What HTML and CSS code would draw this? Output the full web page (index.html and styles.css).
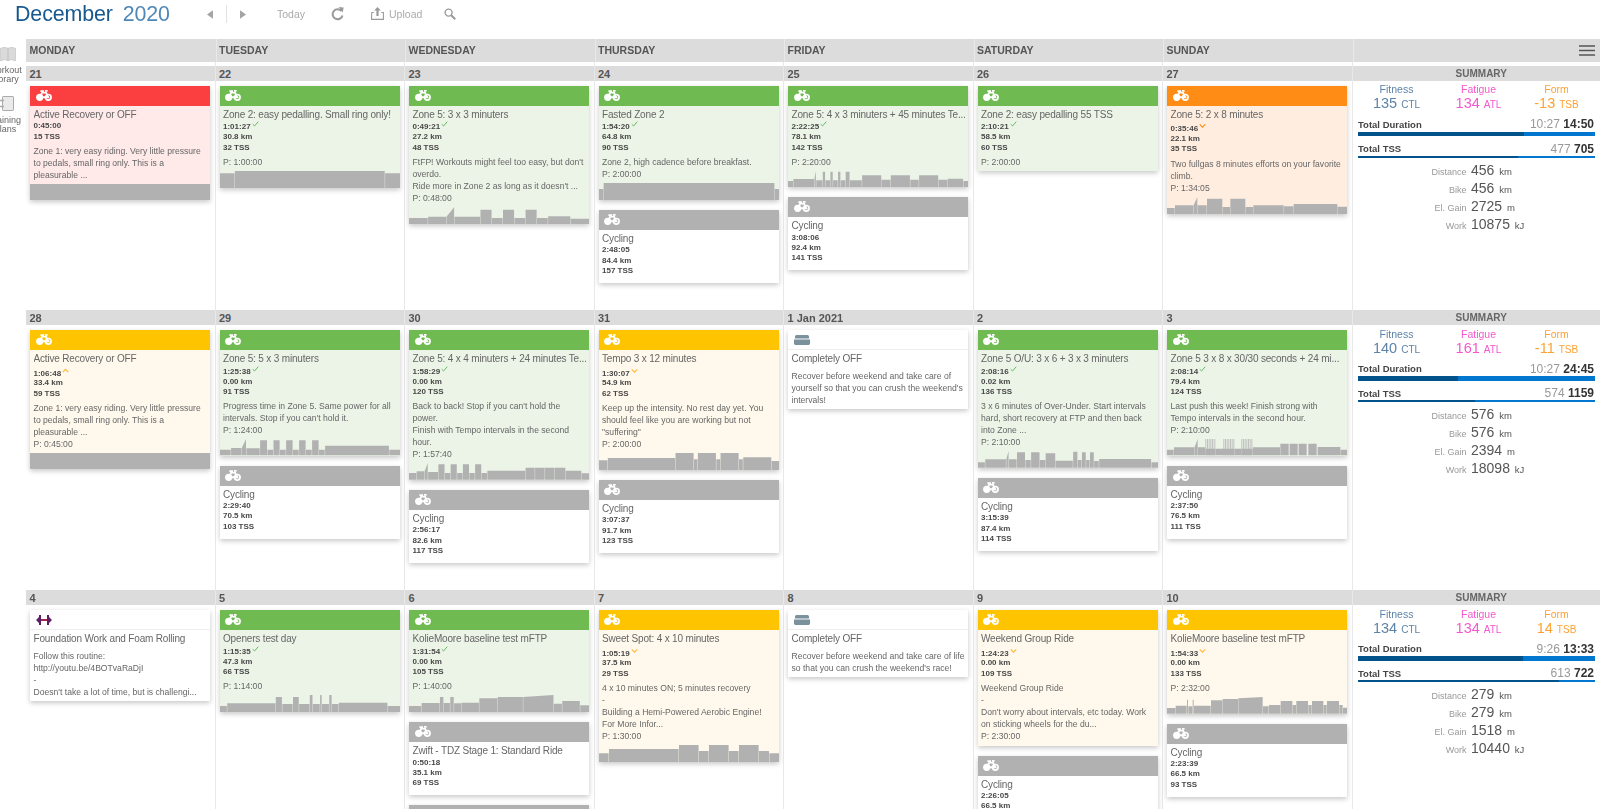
FILE: index.html
```html
<!DOCTYPE html>
<html lang="en">
<head>
<meta charset="utf-8">
<title>December 2020</title>
<link rel="stylesheet" href="styles.css">
</head>
<body>
<svg class="sprite" aria-hidden="true">
  <symbol id="bike" viewBox="0 0 16 11">
    <circle cx="3.7" cy="7.3" r="3.6" fill="currentColor"/>
    <circle cx="3.7" cy="7.3" r="1" fill="none" stroke="currentColor" stroke-width=".6"/>
    <circle cx="12.3" cy="7.3" r="2.8" fill="none" stroke="currentColor" stroke-width="1.7"/>
    <path d="M3.7 7.3 6.2 2.6H10L12.3 7.3H7.6Z" fill="none" stroke="currentColor" stroke-width="1.9"/>
    <path d="M4.4 1.1H8M9 .9H11.6" fill="none" stroke="currentColor" stroke-width="1.8"/>
  </symbol>
  <symbol id="rest" viewBox="0 0 16 10">
    <path d="M2.5 0H13.5Q15 0 15 1.5V3.6H1V1.5Q1 0 2.5 0Z" fill="#7b919c"/>
    <path d="M0 4.6H16V8.6Q16 10 14.6 10H1.4Q0 10 0 8.6Z" fill="#7b919c"/>
    <rect x="2" y="3.6" width="12" height="1" fill="#b9c5cb"/>
  </symbol>
  <symbol id="weights" viewBox="0 0 16 10">
    <path d="M3 0H5V10H3ZM11 0H13V10H11Z" fill="#5c1f63"/>
    <path d="M0 5 3 2V8ZM16 5 13 2V8Z" fill="#5c1f63"/>
    <rect x="5" y="4" width="6" height="2" fill="#a3244e"/>
  </symbol>
  <symbol id="tick" viewBox="0 0 8 7"><path d="M.8 3.8 2.9 5.8 7.2.8" fill="none" stroke="currentColor" stroke-width="1.1"/></symbol>
  <symbol id="down" viewBox="0 0 8 7"><path d="M.8 1.6 4 4.8 7.2 1.6" fill="none" stroke="currentColor" stroke-width="1.3"/></symbol>
  <symbol id="up" viewBox="0 0 8 7"><path d="M.8 4.8 4 1.6 7.2 4.8" fill="none" stroke="currentColor" stroke-width="1.3"/></symbol>
</svg>

<div class="app">
  <header class="topbar">
    <h1 class="month">December <span class="year">2020</span></h1>
    <nav class="pager">
      <svg class="arrow" viewBox="0 0 7 10"><path d="M7 0V10L0 5Z"/></svg>
      <span class="pager-rule"></span>
      <svg class="arrow" viewBox="0 0 7 10"><path d="M0 0V10L7 5Z"/></svg>
    </nav>
    <span class="tool tool-today">Today</span>
    <svg class="tool-icon refresh" viewBox="0 0 13 14"><path d="M10.6 4.2A5 5 0 1 0 11.5 8.4" fill="none" stroke="#9a9a9a" stroke-width="2"/><path d="M7.6 0 12.6 .4 11.8 5.4Z" fill="#9a9a9a"/></svg>
    <svg class="tool-icon upload" viewBox="0 0 13 13"><path d="M.6 5.5V12.4H12.4V5.5H10.2M.6 5.5H2.8" fill="none" stroke="#9a9a9a" stroke-width="1.1"/><path d="M6.5 0 9.8 3.6H7.6V9H5.4V3.6H3.2Z" fill="#9a9a9a"/></svg>
    <span class="tool tool-upload">Upload</span>
    <svg class="tool-icon search" viewBox="0 0 12 12"><circle cx="4.6" cy="4.6" r="3.5" fill="none" stroke="#9a9a9a" stroke-width="1.4"/><path d="M7.2 7.2 11.2 11.2" stroke="#9a9a9a" stroke-width="2"/></svg>
  </header>

  <div class="main">
    <aside class="sidebar">
      <div class="side-item">
        <svg class="side-book" viewBox="0 0 16 14"><path d="M0 1.5 5 0 8 1.5 11 0 16 1.5V14L11 12.5 8 14 5 12.5 0 14Z" fill="#dadada" stroke="#bdbdbd" stroke-width=".6"/><path d="M8 1.5V14" stroke="#b5b5b5" stroke-width=".7"/></svg>
        <span class="side-label">Workout<br>Library</span>
      </div>
      <div class="side-item side-item-plans">
        <svg class="side-plan" viewBox="0 0 14 15"><rect x="2.5" y=".5" width="11" height="14" rx=".6" fill="#eaeaea" stroke="#ababab"/><path d="M0 4.5H4M0 10.5H4" stroke="#ababab" stroke-width="1.4"/></svg>
        <span class="side-label">Training<br>Plans</span>
      </div>
    </aside>

    <div class="calendar">
      <div class="week-head">
        <div class="head-cell">MONDAY</div>
        <div class="head-cell">TUESDAY</div>
        <div class="head-cell">WEDNESDAY</div>
        <div class="head-cell">THURSDAY</div>
        <div class="head-cell">FRIDAY</div>
        <div class="head-cell">SATURDAY</div>
        <div class="head-cell">SUNDAY</div>
        <div class="head-cell head-menu"><svg class="menu" viewBox="0 0 16 11"><path d="M0 1H16M0 5.5H16M0 10H16" stroke="#555" stroke-width="1.4"/></svg></div>
      </div>

      <!-- WEEK 1 -->
      <section class="week week-first">
        <div class="day"><div class="date">21</div><div class="stack">
          <article class="card red">
            <div class="card-head"><svg class="bike"><use href="#bike"/></svg></div>
            <div class="card-body">
              <h3 class="card-title">Active Recovery or OFF</h3>
              <ul class="card-stats"><li>0:45:00</li><li>15 TSS</li></ul>
              <div class="card-notes"><p>Zone 1: very easy riding. Very little pressure to pedals, small ring only. This is a pleasurable ...</p></div>
            </div>
            <svg class="chart" height="16.33" viewBox="0 0 471 49" preserveAspectRatio="none"><path d="M0 49V0H471V49Z"/></svg>
          </article>
        </div></div>

        <div class="day"><div class="date">22</div><div class="stack">
          <article class="card green">
            <div class="card-head"><svg class="bike"><use href="#bike"/></svg></div>
            <div class="card-body">
              <h3 class="card-title">Zone 2: easy pedalling. Small ring only!</h3>
              <ul class="card-stats"><li>1:01:27 <svg class="flag ok"><use href="#tick"/></svg></li><li>30.8 km</li><li>32 TSS</li></ul>
              <div class="card-notes"><p>P: 1:00:00</p></div>
            </div>
            <svg class="chart" height="17" viewBox="0 0 471 51" preserveAspectRatio="none"><path d="M0 51V7H38V51ZM39 51V0H431V51ZM432 51V7H471V51Z"/></svg>
          </article>
        </div></div>

        <div class="day"><div class="date">23</div><div class="stack">
          <article class="card green">
            <div class="card-head"><svg class="bike"><use href="#bike"/></svg></div>
            <div class="card-body">
              <h3 class="card-title">Zone 5: 3 x 3 minuters</h3>
              <ul class="card-stats"><li>0:49:21 <svg class="flag ok"><use href="#tick"/></svg></li><li>27.2 km</li><li>48 TSS</li></ul>
              <div class="card-notes"><p>FtFP! Workouts might feel too easy, but don't overdo.<br>Ride more in Zone 2 as long as it doesn't ...</p><p>P: 0:48:00</p></div>
            </div>
            <svg class="chart" height="17.33" viewBox="0 0 471 52" preserveAspectRatio="none"><path d="M0 52V33H49V52ZM50 52V29H97V52ZM98 52V29L118 1V52ZM119 52V29H186V52ZM187 52V8H216V52ZM217 52V33H245V52ZM246 52V8H275V52ZM276 52V33H304V52ZM305 52V8H334V52ZM335 52V33H363V52ZM364 52V28H422V52ZM423 52V35H471V52Z"/></svg>
          </article>
        </div></div>

        <div class="day"><div class="date">24</div><div class="stack">
          <article class="card green">
            <div class="card-head"><svg class="bike"><use href="#bike"/></svg></div>
            <div class="card-body">
              <h3 class="card-title">Fasted Zone 2</h3>
              <ul class="card-stats"><li>1:54:20 <svg class="flag ok"><use href="#tick"/></svg></li><li>64.8 km</li><li>90 TSS</li></ul>
              <div class="card-notes"><p>Zone 2, high cadence before breakfast.</p><p>P: 2:00:00</p></div>
            </div>
            <svg class="chart" height="17" viewBox="0 0 468 51" preserveAspectRatio="none"><path d="M0 51V18H11V51ZM12 51V0H456V51ZM457 51V18H468V51Z"/></svg>
          </article>
          <article class="card grey">
            <div class="card-head"><svg class="bike"><use href="#bike"/></svg></div>
            <div class="card-body">
              <h3 class="card-title">Cycling</h3>
              <ul class="card-stats"><li>2:48:05</li><li>84.4 km</li><li>157 TSS</li></ul>
            </div>
          </article>
        </div></div>

        <div class="day"><div class="date">25</div><div class="stack">
          <article class="card green">
            <div class="card-head"><svg class="bike"><use href="#bike"/></svg></div>
            <div class="card-body">
              <h3 class="card-title">Zone 5: 4 x 3 minuters + 45 minutes Te...</h3>
              <ul class="card-stats"><li>2:22:25 <svg class="flag ok"><use href="#tick"/></svg></li><li>78.1 km</li><li>142 TSS</li></ul>
              <div class="card-notes"><p>P: 2:20:00</p></div>
            </div>
            <svg class="chart" height="16.33" viewBox="0 0 471 49" preserveAspectRatio="none"><path d="M0 49V30H13V49ZM14 49V24H68V49ZM69 49V24L73 0V49ZM74 49V28H90V49ZM91 49V2H97V49ZM98 49V28H110V49ZM111 49V2H117V49ZM118 49V28H130V49ZM131 49V2H137V49ZM138 49V28H150V49ZM151 49V2H161V49ZM162 49V28H193V49ZM194 49V13H244V49ZM245 49V26H268V49ZM269 49V13H319V49ZM320 49V26H342V49ZM343 49V13H393V49ZM394 49V26H417V49ZM418 49V23H458V49ZM459 49V30H471V49Z"/></svg>
          </article>
          <article class="card grey">
            <div class="card-head"><svg class="bike"><use href="#bike"/></svg></div>
            <div class="card-body">
              <h3 class="card-title">Cycling</h3>
              <ul class="card-stats"><li>3:08:06</li><li>92.4 km</li><li>141 TSS</li></ul>
            </div>
          </article>
        </div></div>

        <div class="day"><div class="date">26</div><div class="stack">
          <article class="card green">
            <div class="card-head"><svg class="bike"><use href="#bike"/></svg></div>
            <div class="card-body">
              <h3 class="card-title">Zone 2: easy pedalling 55 TSS</h3>
              <ul class="card-stats"><li>2:10:21 <svg class="flag ok"><use href="#tick"/></svg></li><li>58.5 km</li><li>60 TSS</li></ul>
              <div class="card-notes"><p>P: 2:00:00</p></div>
            </div>
          </article>
        </div></div>

        <div class="day"><div class="date">27</div><div class="stack">
          <article class="card orange">
            <div class="card-head"><svg class="bike"><use href="#bike"/></svg></div>
            <div class="card-body">
              <h3 class="card-title">Zone 5: 2 x 8 minutes</h3>
              <ul class="card-stats"><li class="flagged">0:35:46 <svg class="flag high"><use href="#down"/></svg></li><li>22.1 km</li><li>35 TSS</li></ul>
              <div class="card-notes"><p>Two fullgas 8 minutes efforts on your favorite climb.</p><p>P: 1:34:05</p></div>
            </div>
            <svg class="chart" height="17" viewBox="0 0 540 51" preserveAspectRatio="none"><path d="M0 51V33H23V51ZM24 51V25H79V51ZM80 51V25L91 0V51ZM92 51V25H119V51ZM120 51V5H166V51ZM167 51V30H189V51ZM190 51V5H235V51ZM236 51V30H258V51ZM259 51V25H350V51ZM351 51V28H379V51ZM380 51V21H511V51ZM512 51V29H540V51Z"/></svg>
          </article>
        </div></div>

        <aside class="summary">
          <div class="date date-summary">SUMMARY</div>
          <div class="metrics">
            <div class="metric fitness"><span class="metric-name">Fitness</span><span class="metric-value">135 <small>CTL</small></span></div>
            <div class="metric fatigue"><span class="metric-name">Fatigue</span><span class="metric-value">134 <small>ATL</small></span></div>
            <div class="metric form"><span class="metric-name">Form</span><span class="metric-value">-13 <small>TSB</small></span></div>
          </div>
          <div class="total"><span class="total-name">Total Duration</span><span class="total-value">10:27 <b>14:50</b></span></div>
          <div class="bar bar-thick"><div class="bar-fill" style="width:70.4%"></div></div>
          <div class="total total-tss"><span class="total-name">Total TSS</span><span class="total-value">477 <b>705</b></span></div>
          <div class="bar"><div class="bar-fill" style="width:67.6%"></div></div>
          <dl class="sums">
            <dt>Distance</dt><dd>456 <small>km</small></dd>
            <dt>Bike</dt><dd>456 <small>km</small></dd>
            <dt>El. Gain</dt><dd>2725 <small>m</small></dd>
            <dt>Work</dt><dd>10875 <small>kJ</small></dd>
          </dl>
        </aside>
      </section>

      <!-- WEEK 2 -->
      <section class="week">
        <div class="day"><div class="date">28</div><div class="stack">
          <article class="card yellow">
            <div class="card-head"><svg class="bike"><use href="#bike"/></svg></div>
            <div class="card-body">
              <h3 class="card-title">Active Recovery or OFF</h3>
              <ul class="card-stats"><li class="flagged">1:06:48 <svg class="flag warn"><use href="#up"/></svg></li><li>33.4 km</li><li>59 TSS</li></ul>
              <div class="card-notes"><p>Zone 1: very easy riding. Very little pressure to pedals, small ring only. This is a pleasurable ...</p><p>P: 0:45:00</p></div>
            </div>
            <svg class="chart" height="16.33" viewBox="0 0 471 49" preserveAspectRatio="none"><path d="M0 49V0H471V49Z"/></svg>
          </article>
        </div></div>

        <div class="day"><div class="date">29</div><div class="stack">
          <article class="card green">
            <div class="card-head"><svg class="bike"><use href="#bike"/></svg></div>
            <div class="card-body">
              <h3 class="card-title">Zone 5: 5 x 3 minuters</h3>
              <ul class="card-stats"><li>1:25:38 <svg class="flag ok"><use href="#tick"/></svg></li><li>0.00 km</li><li>91 TSS</li></ul>
              <div class="card-notes"><p>Progress time in Zone 5. Same power for all intervals. Stop if you can't hold it.</p><p>P: 1:24:00</p></div>
            </div>
            <svg class="chart" height="16.33" viewBox="0 0 471 49" preserveAspectRatio="none"><path d="M0 49V32H28V49ZM29 49V27H56V49ZM57 49V27L68 0V49ZM69 49V28H104V49ZM105 49V4H123V49ZM124 49V32H139V49ZM140 49V4H156V49ZM157 49V32H172V49ZM173 49V4H190V49ZM191 49V32H206V49ZM207 49V4H224V49ZM225 49V32H240V49ZM241 49V4H258V49ZM259 49V32H274V49ZM275 49V20H442V49ZM443 49V32H471V49Z"/></svg>
          </article>
          <article class="card grey">
            <div class="card-head"><svg class="bike"><use href="#bike"/></svg></div>
            <div class="card-body">
              <h3 class="card-title">Cycling</h3>
              <ul class="card-stats"><li>2:29:40</li><li>70.5 km</li><li>103 TSS</li></ul>
            </div>
          </article>
        </div></div>

        <div class="day"><div class="date">30</div><div class="stack">
          <article class="card green">
            <div class="card-head"><svg class="bike"><use href="#bike"/></svg></div>
            <div class="card-body">
              <h3 class="card-title">Zone 5: 4 x 4 minuters + 24 minutes Te...</h3>
              <ul class="card-stats"><li>1:58:29 <svg class="flag ok"><use href="#tick"/></svg></li><li>0.00 km</li><li>120 TSS</li></ul>
              <div class="card-notes"><p>Back to back! Stop if you can't hold the power.<br>Finish with Tempo intervals in the second hour.</p><p>P: 1:57:40</p></div>
            </div>
            <svg class="chart" height="16.67" viewBox="0 0 471 50" preserveAspectRatio="none"><path d="M0 50V30H19V50ZM20 50V25H40V50ZM41 50V25L49 0V50ZM50 50V27H76V50ZM77 50V4H93V50ZM94 50V30H108V50ZM109 50V4H125V50ZM126 50V30H140V50ZM141 50V4H157V50ZM158 50V30H172V50ZM173 50V4H189V50ZM190 50V30H204V50ZM205 50V23H304V50ZM305 50V14H329V50ZM330 50V14H355V50ZM356 50V14H381V50ZM382 50V14H409V50ZM410 50V23H451V50ZM452 50V31H471V50Z"/></svg>
          </article>
          <article class="card grey">
            <div class="card-head"><svg class="bike"><use href="#bike"/></svg></div>
            <div class="card-body">
              <h3 class="card-title">Cycling</h3>
              <ul class="card-stats"><li>2:56:17</li><li>82.6 km</li><li>117 TSS</li></ul>
            </div>
          </article>
        </div></div>

        <div class="day"><div class="date">31</div><div class="stack">
          <article class="card yellow">
            <div class="card-head"><svg class="bike"><use href="#bike"/></svg></div>
            <div class="card-body">
              <h3 class="card-title">Tempo 3 x 12 minutes</h3>
              <ul class="card-stats"><li class="flagged">1:30:07 <svg class="flag warn"><use href="#down"/></svg></li><li>54.9 km</li><li>62 TSS</li></ul>
              <div class="card-notes"><p>Keep up the intensity. No rest day yet. You should feel like you are working but not "suffering"</p><p>P: 2:00:00</p></div>
            </div>
            <svg class="chart" height="17" viewBox="0 0 468 51" preserveAspectRatio="none"><path d="M0 51V22H22V51ZM23 51V15H198V51ZM199 51V0H246V51ZM247 51V19H256V51ZM257 51V0H304V51ZM305 51V19H315V51ZM316 51V0H363V51ZM364 51V19H374V51ZM375 51V13H448V51ZM449 51V24H468V51Z"/></svg>
          </article>
          <article class="card grey">
            <div class="card-head"><svg class="bike"><use href="#bike"/></svg></div>
            <div class="card-body">
              <h3 class="card-title">Cycling</h3>
              <ul class="card-stats"><li>3:07:37</li><li>91.7 km</li><li>123 TSS</li></ul>
            </div>
          </article>
        </div></div>

        <div class="day"><div class="date">1 Jan 2021</div><div class="stack">
          <article class="card plain">
            <div class="card-head"><svg class="rest"><use href="#rest"/></svg></div>
            <div class="card-body">
              <h3 class="card-title">Completely OFF</h3>
              <div class="card-notes"><p>Recover before weekend and take care of yourself so that you can crush the weekend's intervals!</p></div>
            </div>
          </article>
        </div></div>

        <div class="day"><div class="date">2</div><div class="stack">
          <article class="card green">
            <div class="card-head"><svg class="bike"><use href="#bike"/></svg></div>
            <div class="card-body">
              <h3 class="card-title">Zone 5 O/U: 3 x 6 + 3 x 3 minuters</h3>
              <ul class="card-stats"><li>2:08:16 <svg class="flag ok"><use href="#tick"/></svg></li><li>0.02 km</li><li>136 TSS</li></ul>
              <div class="card-notes"><p>3 x 6 minutes of Over-Under. Start intervals hard, short recovery at FTP and then back into Zone ...</p><p>P: 2:10:00</p></div>
            </div>
            <svg class="chart" height="16.67" viewBox="0 0 471 50" preserveAspectRatio="none"><path d="M0 50V34H18V50ZM19 50V25H73V50ZM74 50V25L80 0V50ZM81 50V25H101V50ZM102 50V4H123V50ZM124 50V27H138V50ZM139 50V4H161V50ZM162 50V27H176V50ZM177 50V7H202V50ZM203 50V29H248V50ZM249 50V2H260V50ZM261 50V27H271V50ZM272 50V4H282V50ZM283 50V27H292V50ZM293 50V4H303V50ZM304 50V30H316V50ZM317 50V24H453V50ZM454 50V34H471V50Z"/></svg>
          </article>
          <article class="card grey">
            <div class="card-head"><svg class="bike"><use href="#bike"/></svg></div>
            <div class="card-body">
              <h3 class="card-title">Cycling</h3>
              <ul class="card-stats"><li>3:15:39</li><li>87.4 km</li><li>114 TSS</li></ul>
            </div>
          </article>
        </div></div>

        <div class="day"><div class="date">3</div><div class="stack">
          <article class="card green">
            <div class="card-head"><svg class="bike"><use href="#bike"/></svg></div>
            <div class="card-body">
              <h3 class="card-title">Zone 5 3 x 8 x 30/30 seconds + 24 mi...</h3>
              <ul class="card-stats"><li>2:08:14 <svg class="flag ok"><use href="#tick"/></svg></li><li>79.4 km</li><li>124 TSS</li></ul>
              <div class="card-notes"><p>Last push this week! Finish strong with Tempo intervals in the second hour.</p><p>P: 2:10:00</p></div>
            </div>
            <svg class="chart" height="16.33" viewBox="0 0 540 49" preserveAspectRatio="none"><path d="M0 49V32H20V49ZM21 49V25H82V49ZM83 49V25L92 0V49ZM93 49V25H114V49ZM115 49V29H146V49ZM147 49V29H169V49ZM169 49V29H203V49ZM204 49V29H222V49ZM223 49V29H257V49ZM258 49V25H339V49ZM340 49V14H365V49ZM368 49V14H392V49ZM395 49V14H419V49ZM424 49V14H449V49ZM452 49V24H520V49ZM521 49V32H540V49Z"/><path class="chart-hatch" d="M115 24.5H146M169 24.5H203M223 24.5H257"/></svg>
          </article>
          <article class="card grey">
            <div class="card-head"><svg class="bike"><use href="#bike"/></svg></div>
            <div class="card-body">
              <h3 class="card-title">Cycling</h3>
              <ul class="card-stats"><li>2:37:50</li><li>76.5 km</li><li>111 TSS</li></ul>
            </div>
          </article>
        </div></div>

        <aside class="summary">
          <div class="date date-summary">SUMMARY</div>
          <div class="metrics">
            <div class="metric fitness"><span class="metric-name">Fitness</span><span class="metric-value">140 <small>CTL</small></span></div>
            <div class="metric fatigue"><span class="metric-name">Fatigue</span><span class="metric-value">161 <small>ATL</small></span></div>
            <div class="metric form"><span class="metric-name">Form</span><span class="metric-value">-11 <small>TSB</small></span></div>
          </div>
          <div class="total"><span class="total-name">Total Duration</span><span class="total-value">10:27 <b>24:45</b></span></div>
          <div class="bar bar-thick"><div class="bar-fill" style="width:42.3%"></div></div>
          <div class="total total-tss"><span class="total-name">Total TSS</span><span class="total-value">574 <b>1159</b></span></div>
          <div class="bar"><div class="bar-fill" style="width:49.4%"></div></div>
          <dl class="sums">
            <dt>Distance</dt><dd>576 <small>km</small></dd>
            <dt>Bike</dt><dd>576 <small>km</small></dd>
            <dt>El. Gain</dt><dd>2394 <small>m</small></dd>
            <dt>Work</dt><dd>18098 <small>kJ</small></dd>
          </dl>
        </aside>
      </section>

      <!-- WEEK 3 -->
      <section class="week">
        <div class="day"><div class="date">4</div><div class="stack">
          <article class="card plain">
            <div class="card-head"><svg class="weights"><use href="#weights"/></svg></div>
            <div class="card-body">
              <h3 class="card-title">Foundation Work and Foam Rolling</h3>
              <div class="card-notes"><p>Follow this routine:<br>http://youtu.be/4BOTvaRaDjI<br>-<br>Doesn't take a lot of time, but is challengi...</p></div>
            </div>
          </article>
        </div></div>

        <div class="day"><div class="date">5</div><div class="stack">
          <article class="card green">
            <div class="card-head"><svg class="bike"><use href="#bike"/></svg></div>
            <div class="card-body">
              <h3 class="card-title">Openers test day</h3>
              <ul class="card-stats"><li>1:15:35 <svg class="flag ok"><use href="#tick"/></svg></li><li>47.3 km</li><li>66 TSS</li></ul>
              <div class="card-notes"><p>P: 1:14:00</p></div>
            </div>
            <svg class="chart" height="17" viewBox="0 0 471 51" preserveAspectRatio="none"><path d="M0 51V33H18V51ZM19 51V25H145V51ZM146 51V6H162V51ZM163 51V27H190V51ZM191 51V6H206V51ZM207 51V27H234V51ZM235 51V0H242V51ZM243 51V27H261V51ZM262 51V0H266V51ZM267 51V27H285V51ZM286 51V0H292V51ZM293 51V27H310V51ZM311 51V23H438V51ZM439 51V33H471V51Z"/></svg>
          </article>
        </div></div>

        <div class="day"><div class="date">6</div><div class="stack">
          <article class="card green">
            <div class="card-head"><svg class="bike"><use href="#bike"/></svg></div>
            <div class="card-body">
              <h3 class="card-title">KolieMoore baseline test mFTP</h3>
              <ul class="card-stats"><li>1:31:54 <svg class="flag ok"><use href="#tick"/></svg></li><li>0.00 km</li><li>105 TSS</li></ul>
              <div class="card-notes"><p>P: 1:40:00</p></div>
            </div>
            <svg class="chart" height="17" viewBox="0 0 471 51" preserveAspectRatio="none"><path d="M0 51V33H32V51ZM33 51V24H80V51ZM81 51V6H90V51ZM91 51V24H107V51ZM108 51V6H117V51ZM118 51V25H136V51ZM137 51V23H183V51ZM184 51V10H231V51ZM232 51V6H298V51ZM299 51V6L378 0V51ZM379 51V26H400V51ZM401 51V18H447V51ZM448 51V31H471V51Z"/></svg>
          </article>
          <article class="card grey">
            <div class="card-head"><svg class="bike"><use href="#bike"/></svg></div>
            <div class="card-body">
              <h3 class="card-title">Zwift - TDZ Stage 1: Standard Ride</h3>
              <ul class="card-stats"><li>0:50:18</li><li>35.1 km</li><li>69 TSS</li></ul>
            </div>
          </article>
          <article class="card grey">
            <div class="card-head"><svg class="bike"><use href="#bike"/></svg></div>
          </article>
        </div></div>

        <div class="day"><div class="date">7</div><div class="stack">
          <article class="card yellow">
            <div class="card-head"><svg class="bike"><use href="#bike"/></svg></div>
            <div class="card-body">
              <h3 class="card-title">Sweet Spot: 4 x 10 minutes</h3>
              <ul class="card-stats"><li class="flagged">1:05:19 <svg class="flag warn"><use href="#down"/></svg></li><li>37.5 km</li><li>29 TSS</li></ul>
              <div class="card-notes"><p>4 x 10 minutes ON; 5 minutes recovery<br>-<br>Building a Hemi-Powered Aerobic Engine!<br>For More Infor...</p><p>P: 1:30:00</p></div>
            </div>
            <svg class="chart" height="17" viewBox="0 0 468 51" preserveAspectRatio="none"><path d="M0 51V25H25V51ZM26 51V12H207V51ZM208 51V0H259V51ZM260 51V18H285V51ZM286 51V0H337V51ZM338 51V18H363V51ZM364 51V0H415V51ZM416 51V18H442V51ZM443 51V25H468V51Z"/></svg>
          </article>
        </div></div>

        <div class="day"><div class="date">8</div><div class="stack">
          <article class="card plain">
            <div class="card-head"><svg class="rest"><use href="#rest"/></svg></div>
            <div class="card-body">
              <h3 class="card-title">Completely OFF</h3>
              <div class="card-notes"><p>Recover before weekend and take care of life so that you can crush the weekend's race!</p></div>
            </div>
          </article>
        </div></div>

        <div class="day"><div class="date">9</div><div class="stack">
          <article class="card yellow">
            <div class="card-head"><svg class="bike"><use href="#bike"/></svg></div>
            <div class="card-body">
              <h3 class="card-title">Weekend Group Ride</h3>
              <ul class="card-stats"><li class="flagged">1:24:23 <svg class="flag warn"><use href="#down"/></svg></li><li>0.00 km</li><li>109 TSS</li></ul>
              <div class="card-notes"><p>Weekend Group Ride<br>-<br>Don't worry about intervals, etc today. Work on sticking wheels for the du...</p><p>P: 2:30:00</p></div>
            </div>
          </article>
          <article class="card grey">
            <div class="card-head"><svg class="bike"><use href="#bike"/></svg></div>
            <div class="card-body">
              <h3 class="card-title">Cycling</h3>
              <ul class="card-stats"><li>2:26:05</li><li>66.5 km</li></ul>
            </div>
          </article>
        </div></div>

        <div class="day"><div class="date">10</div><div class="stack">
          <article class="card yellow">
            <div class="card-head"><svg class="bike"><use href="#bike"/></svg></div>
            <div class="card-body">
              <h3 class="card-title">KolieMoore baseline test mFTP</h3>
              <ul class="card-stats"><li class="flagged">1:54:33 <svg class="flag warn"><use href="#down"/></svg></li><li>0.00 km</li><li>133 TSS</li></ul>
              <div class="card-notes"><p>P: 2:32:00</p></div>
            </div>
            <svg class="chart" height="16.67" viewBox="0 0 540 50" preserveAspectRatio="none"><path d="M0 50V33H25V50ZM26 50V26H59V50ZM60 50V8H63V50ZM64 50V28H76V50ZM77 50V8H80V50ZM81 50V26H131V50ZM132 50V10H166V50ZM167 50V6H213V50ZM214 50V4L287 0V50ZM288 50V28H305V50ZM306 50V24H340V50ZM341 50V12H376V50ZM377 50V24H387V50ZM388 50V12H423V50ZM424 50V24H434V50ZM435 50V12H469V50ZM470 50V24H479V50ZM480 50V12H516V50ZM517 50V24H527V50ZM528 50V32H540V50Z"/></svg>
          </article>
          <article class="card grey">
            <div class="card-head"><svg class="bike"><use href="#bike"/></svg></div>
            <div class="card-body">
              <h3 class="card-title">Cycling</h3>
              <ul class="card-stats"><li>2:23:39</li><li>66.5 km</li><li>93 TSS</li></ul>
            </div>
          </article>
        </div></div>

        <aside class="summary">
          <div class="date date-summary">SUMMARY</div>
          <div class="metrics">
            <div class="metric fitness"><span class="metric-name">Fitness</span><span class="metric-value">134 <small>CTL</small></span></div>
            <div class="metric fatigue"><span class="metric-name">Fatigue</span><span class="metric-value">134 <small>ATL</small></span></div>
            <div class="metric form"><span class="metric-name">Form</span><span class="metric-value">14 <small>TSB</small></span></div>
          </div>
          <div class="total"><span class="total-name">Total Duration</span><span class="total-value">9:26 <b>13:33</b></span></div>
          <div class="bar bar-thick"><div class="bar-fill" style="width:69.6%"></div></div>
          <div class="total total-tss"><span class="total-name">Total TSS</span><span class="total-value">613 <b>722</b></span></div>
          <div class="bar"><div class="bar-fill" style="width:84.8%"></div></div>
          <dl class="sums">
            <dt>Distance</dt><dd>279 <small>km</small></dd>
            <dt>Bike</dt><dd>279 <small>km</small></dd>
            <dt>El. Gain</dt><dd>1518 <small>m</small></dd>
            <dt>Work</dt><dd>10440 <small>kJ</small></dd>
          </dl>
        </aside>
      </section>
    </div>
  </div>
</div>
</body>
</html>
```

FILE: styles.css
```css
* { box-sizing: border-box; }
html, body { margin: 0; padding: 0; height: 809px; overflow: hidden; background: #fff; }
body { font-family: "Liberation Sans", Arial, sans-serif; color: #555; }
h1, h3, p, ul, dl, dd { margin: 0; padding: 0; font-weight: normal; }
ul { list-style: none; }
.sprite { display: none; }

.app { height: 809px; overflow: hidden; filter: blur(.35px); }

/* top bar */
.topbar { height: 39.3px; display: flex; align-items: flex-start; padding: 5px 0 0 15px; }
.month { font-size: 21.4px; line-height: 21px; width: 154px; color: #17588f; letter-spacing: -.1px; flex: none; margin-top: -1px; white-space: nowrap; }
.year { color: #4f88b7; margin-left: 4px; }
.pager { display: flex; align-items: center; height: 18px; margin-left: 38px; width: 50px; flex: none; }
.arrow { width: 6px; height: 9px; fill: #a4a4a4; flex: none; }
.pager-rule { width: 1px; height: 18px; background: #e2e2e2; margin: 0 13px; }
.tool { font-size: 10.5px; line-height: 18px; color: #aaa; flex: none; }
.tool-today { margin-left: 20px; }
.tool-icon { flex: none; }
.refresh { width: 13px; height: 14px; margin: 2px 0 0 26px; }
.upload { width: 13px; height: 13px; margin: 2px 0 0 27px; }
.tool-upload { margin-left: 5px; }
.search { width: 12px; height: 12px; margin: 3px 0 0 22px; }

/* layout */
.main { display: flex; }
.sidebar { width: 26px; flex: none; padding-top: 8px; }
.side-item { width: 36px; margin-left: -13px; display: flex; flex-direction: column; align-items: center; }
.side-item-plans { margin-top: 12.5px; }
.side-book { width: 16px; height: 14px; margin-left: 6px; }
.side-plan { width: 14px; height: 15px; margin-left: 4px; }
.side-label { font-size: 9px; line-height: 8.7px; text-align: center; color: #666; margin-top: 5px; white-space: nowrap; }
.calendar { flex: 1; min-width: 0; }

.week-head, .week { display: grid; grid-template-columns: repeat(7, 189.5px) 1fr; }
.week-head { background: #dcdcdc; height: 22.7px; }
.head-cell { font-size: 10.5px; font-weight: bold; line-height: 22.5px; color: #555; padding-left: 2.5px; border-left: 1px solid #e8e8e8; }
.head-cell:first-child { border-left: 0; padding-left: 3.5px; }
.head-menu { display: flex; justify-content: flex-end; align-items: center; padding-right: 5px; }
.menu { width: 16px; height: 11px; }

.week-first .day, .week-first .summary { padding-top: 4px; }
.day { border-right: 1px solid #e8e8e8; padding-bottom: 27.5px; min-width: 0; }
.date { height: 15px; background: #dcdcdc; font-size: 11px; font-weight: bold; line-height: 16px; color: #555; padding-left: 3.5px; }
.date-summary { font-size: 10px; color: #666; text-align: center; padding-left: 10px; }
.stack { padding: 5px 4.5px 0 4px; display: flex; flex-direction: column; gap: 10px; }

/* cards */
.card { background: #fff; box-shadow: 0 2px 5px rgba(0, 0, 0, .22); }
.card-head { height: 20px; padding: 4px 0 0 5.5px; }
.bike { display: block; width: 16px; height: 11px; color: #fff; }
.rest, .weights { display: block; width: 16px; height: 10px; }
.card-body { padding: 2px 3.5px 0; }
.card-body:last-child { padding-bottom: 3.6px; }
.card-title { font-size: 10px; letter-spacing: -.17px; line-height: 13.5px; color: #666; white-space: nowrap; overflow: hidden; }
.card-stats { font-size: 8px; font-weight: bold; line-height: 10.3px; color: #484848; margin-bottom: 3px; }
.card-stats .flagged { padding-top: 1.7px; }
.flag { width: 7px; height: 6px; vertical-align: 1.5px; margin-left: -1px; }
.ok { color: #5cb85c; }
.warn { color: #ffb733; }
.high { color: #ff8c14; }
.card-notes { font-size: 8.6px; line-height: 12px; color: #666; }
.card-title + .card-notes { margin-top: 4px; }
.chart { display: block; width: 100%; margin-top: 3px; fill: #b1b1b1; }
.chart-hatch { fill: none; stroke: #b1b1b1; stroke-width: 49; stroke-dasharray: 3 2; opacity: .75; }

.red .card-head { background: #fb3f40; }
.red { background: #ffe9e9; }
.green .card-head { background: #6fbb52; }
.green { background: #ebf4e7; }
.yellow .card-head { background: #ffc400; }
.yellow { background: #fff9ed; }
.orange .card-head { background: #ff8c14; }
.orange { background: #ffeee0; }
.grey .card-head { background: #b1b1b1; }
.plain .card-head { border-bottom: 1px solid #eee; padding-top: 5px; padding-left: 6px; }

/* summary */
.summary { min-width: 0; }
.metrics { display: grid; grid-template-columns: 79px 85px 71px; padding: 2.5px 0 0 4.5px; }
.metric { display: flex; flex-direction: column; align-items: center; }
.metric-name { font-size: 10.5px; line-height: 12px; }
.metric-value { font-size: 14.5px; line-height: 17px; }
.metric-value small { font-size: 10px; }
.fitness { color: #5d83a8; }
.fatigue { color: #f458cf; }
.form { color: #ffa233; }
.total { display: flex; justify-content: space-between; align-items: center; height: 14px; margin: 4px 6px 0 5.5px; }
.total-tss { margin-top: 5.5px; }
.total-name { font-size: 9.5px; font-weight: bold; color: #444; }
.total-value { font-size: 12px; color: #999; }
.total-value b { color: #333; }
.bar { height: 2.4px; margin: 0 5.5px; background: #0277cf; }
.bar-thick { height: 4.4px; margin-top: .3px; }
.bar-fill { height: 100%; background: #02528c; }
.sums { display: grid; grid-template-columns: 108.5px 1fr; grid-auto-rows: 18px; column-gap: 4.5px; padding: 2.5px 0 0 5.5px; align-items: baseline; }
.sums dt { font-size: 9px; line-height: 18px; text-align: right; color: #999; }
.sums dd { font-size: 14px; line-height: 18px; color: #555; }
.sums small { font-size: 9.5px; margin-left: 1px; }
```
